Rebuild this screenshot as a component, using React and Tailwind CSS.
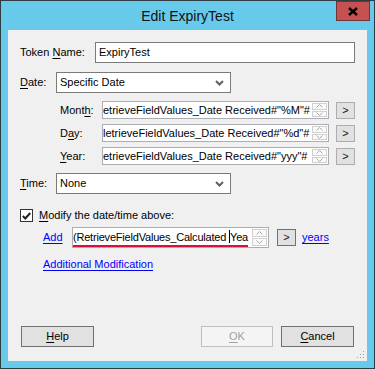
import React from "react";

const F = { fontFamily: '"Liberation Sans", Arial, sans-serif' };

function U({ children }) {
  return <span className="underline underline-offset-[2px]">{children}</span>;
}

function Chevron({ up }) {
  return (
    <svg width="7" height="4" viewBox="0 0 7 4" className="block">
      <polyline
        points={up ? "0.5,3.5 3.5,0.5 6.5,3.5" : "0.5,0.5 3.5,3.5 6.5,0.5"}
        fill="none"
        stroke="#A8A8A8"
        strokeWidth="1"
      />
    </svg>
  );
}

function Spin() {
  return (
    <div className="w-[17px] flex flex-col gap-[1px] p-[1px] shrink-0">
      <div className="flex-1 border border-[#D0D0D0] bg-[#FAFAFA] flex items-center justify-center">
        <Chevron up />
      </div>
      <div className="flex-1 border border-[#D0D0D0] bg-[#FAFAFA] flex items-center justify-center">
        <Chevron />
      </div>
    </div>
  );
}

function SmallBtn({ dark }) {
  return (
    <div
      className={
        "w-[19px] h-[17px] border flex items-center justify-center bg-[#E1E1E1] text-[11px] text-[#111] leading-none " +
        (dark ? "border-[#707070]" : "border-[#ADADAD]")
      }
    >
      &gt;
    </div>
  );
}

function Select({ text }) {
  return (
    <div className="w-[175px] h-[21px] border border-[#7A7A7A] bg-white flex items-center pl-[3px] pr-[6px]">
      <span className="flex-1 text-[11px] text-black">{text}</span>
      <svg width="9" height="6" viewBox="0 0 9 6">
        <polyline points="1,1 4.5,4.5 8,1" fill="none" stroke="#606060" strokeWidth="2" />
      </svg>
    </div>
  );
}

function FieldRow({ label, text }) {
  return (
    <div className="flex items-center h-[18px] mt-[5px] first:mt-0">
      <div className="w-[42px] ml-[40px] text-[11px] text-black">{label}</div>
      <div className="w-[227px] h-[18px] border border-[#ABADB3] bg-white flex">
        <div className="flex-1 overflow-hidden whitespace-nowrap text-[11px] leading-[16px] text-black">
          {text}
        </div>
        <Spin />
      </div>
      <div className="ml-[7px]">
        <SmallBtn />
      </div>
    </div>
  );
}

export default function App() {
  return (
    <div
      className="w-[375px] h-[369px] bg-[#68CAEA] border border-[#2E3C44] flex flex-col overflow-hidden"
      style={F}
    >
      <div className="h-[29px] grid grid-cols-[1fr_auto_1fr] items-start">
        <div />
        <div className="text-[14px] text-[#111] leading-[20px] mt-[5px]">Edit ExpiryTest</div>
        <div className="flex justify-end">
          <div className="w-[34px] h-[20px] mr-[4px] bg-[#C75050] border border-[#6B3535] flex items-center justify-center">
            <svg width="10" height="9" viewBox="0 0 10 9">
              <path d="M1,1 L9,8 M9,1 L1,8" stroke="#000" strokeWidth="2.4" />
            </svg>
          </div>
        </div>
      </div>

      <div className="mx-[7px] h-[331px] bg-[#F0F0F0] flex flex-col pl-[12px] relative">
        <div className="flex items-center mt-[12px] h-[21px]">
          <div className="w-[75px] text-[11px] text-black">
            Token <U>N</U>ame:
          </div>
          <div className="w-[260px] h-[21px] border border-[#7A7A7A] bg-white flex items-center pl-[3px] text-[11px] text-black">
            ExpiryTest
          </div>
        </div>

        <div className="flex items-center mt-[9px]">
          <div className="w-[36px] text-[11px] text-black">
            <U>D</U>ate:
          </div>
          <Select text="Specific Date" />
        </div>

        <div className="flex flex-col mt-[8px]">
          <FieldRow
            label={<>Mont<U>h</U>:</>}
            text={'etrieveFieldValues_Date Received#"%M"#'}
          />
          <FieldRow
            label={<>D<U>a</U>y:</>}
            text={'letrieveFieldValues_Date Received#"%d"#'}
          />
          <FieldRow
            label={<><U>Y</U>ear:</>}
            text={'etrieveFieldValues_Date Received#"yyy"#'}
          />
        </div>

        <div className="flex items-center mt-[8px]">
          <div className="w-[36px] text-[11px] text-black">
            <U>T</U>ime:
          </div>
          <Select text="None" />
        </div>

        <div className="flex items-center mt-[15px] h-[13px]">
          <div className="w-[13px] h-[13px] border border-[#333] bg-white flex items-center justify-center">
            <svg width="9" height="8" viewBox="0 0 9 8">
              <polyline points="0.8,4 3.3,6.5 8.2,1" fill="none" stroke="#222" strokeWidth="2" />
            </svg>
          </div>
          <div className="ml-[6px] text-[11px] text-black">
            <U>M</U>odify the date/time above:
          </div>
        </div>

        <div className="flex items-center mt-[5px] h-[21px]">
          <div className="ml-[23px] w-[29px] text-[11px] text-[#0000FF] underline underline-offset-[2px]">Add</div>
          <div className="w-[197px] h-[21px] border border-[#ABADB3] bg-white flex">
            <div className="flex-1 overflow-hidden whitespace-nowrap text-[11px] tracking-[-0.2px] leading-[17px] text-black pt-[1px]">
              <span className="border-b-2 border-[#D8103C] inline-block leading-[15px]">
                (RetrieveFieldValues_Calculated{" "}
                <span className="inline-block w-[1px] h-[13px] bg-black align-[-2px]" />
                Yea
              </span>
            </div>
            <Spin />
          </div>
          <div className="ml-[8px]">
            <SmallBtn dark />
          </div>
          <div className="ml-[6px] text-[11px] text-[#0000FF] underline underline-offset-[2px]">years</div>
        </div>

        <div className="ml-[23px] mt-[8px] text-[11px] text-[#0000FF] underline underline-offset-[2px] leading-[16px]">
          Additional Modification
        </div>

        <div className="flex-1" />

        <div className="flex items-center mb-[14px] h-[21px]">
          <div className="ml-[1px] w-[73px] h-[21px] border border-[#707070] bg-[#E1E1E1] flex items-center justify-center text-[11px] text-black">
            <U>H</U>elp
          </div>
          <div className="ml-[107px] w-[72px] h-[21px] border border-[#BFBFBF] bg-[#F4F4F4] flex items-center justify-center text-[11px] text-[#A0A0A0]">
            <U>O</U>K
          </div>
          <div className="ml-[8px] w-[73px] h-[21px] border border-[#707070] bg-[#E1E1E1] flex items-center justify-center text-[11px] text-black">
            <U>C</U>ancel
          </div>
        </div>

        <svg width="9" height="9" viewBox="0 0 9 9" className="absolute right-[2px] bottom-[2px]">
          {[[7, 1], [7, 4], [4, 4], [7, 7], [4, 7], [1, 7]].map(([x, y], i) => (
            <rect key={i} x={x} y={y} width="1" height="1" fill="#A0A0A0" />
          ))}
        </svg>
      </div>
    </div>
  );
}
